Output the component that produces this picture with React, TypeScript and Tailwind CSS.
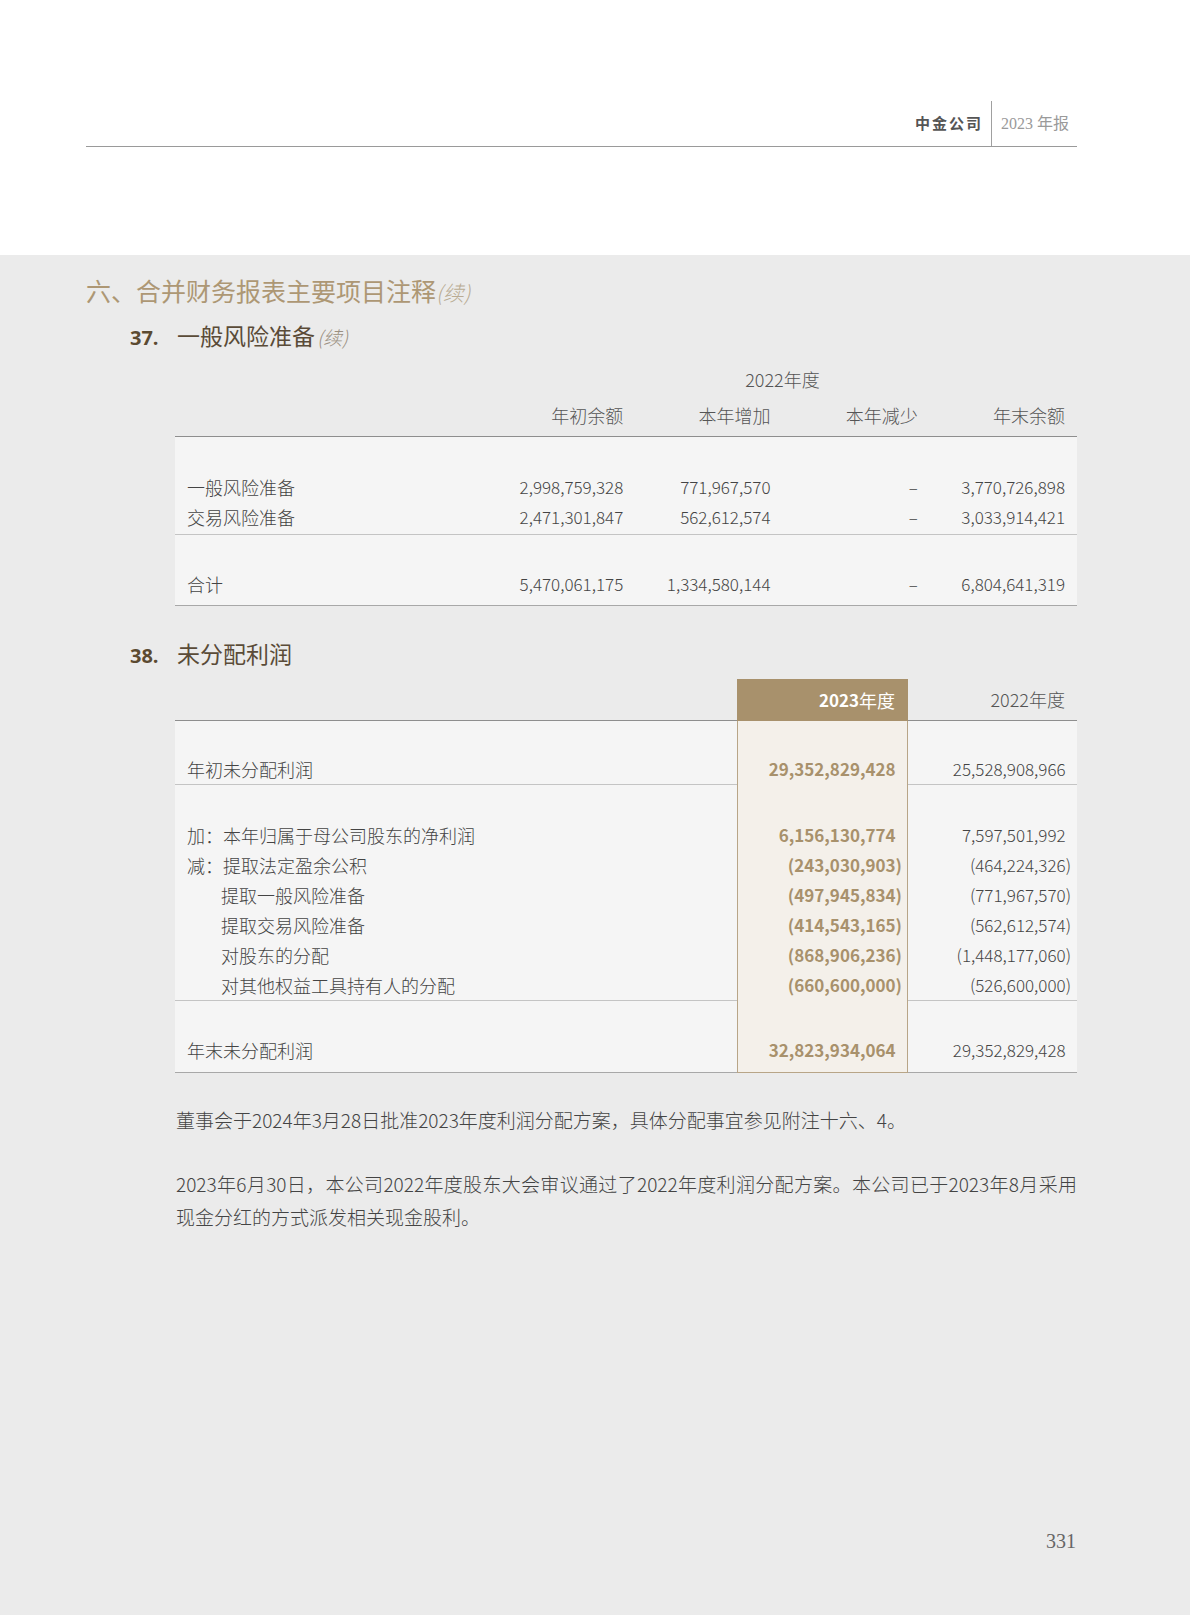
import React from 'react';

const cjk = "font-['Noto_Sans_CJK_SC',sans-serif]";

const reserveRows = [
  { label: '一般风险准备', v: ['2,998,759,328', '771,967,570', '–', '3,770,726,898'] },
  { label: '交易风险准备', v: ['2,471,301,847', '562,612,574', '–', '3,033,914,421'] },
];
const reserveTotal = { label: '合计', v: ['5,470,061,175', '1,334,580,144', '–', '6,804,641,319'] };

type ProfitRow = { label: string; indent?: boolean; a: string; b: string };

const profitGroups: ProfitRow[][] = [
  [{ label: '年初未分配利润', a: '29,352,829,428', b: '25,528,908,966' }],
  [
    { label: '加：本年归属于母公司股东的净利润', a: '6,156,130,774', b: '7,597,501,992' },
    { label: '减：提取法定盈余公积', a: '(243,030,903)', b: '(464,224,326)' },
    { label: '提取一般风险准备', indent: true, a: '(497,945,834)', b: '(771,967,570)' },
    { label: '提取交易风险准备', indent: true, a: '(414,543,165)', b: '(562,612,574)' },
    { label: '对股东的分配', indent: true, a: '(868,906,236)', b: '(1,448,177,060)' },
    { label: '对其他权益工具持有人的分配', indent: true, a: '(660,600,000)', b: '(526,600,000)' },
  ],
  [{ label: '年末未分配利润', a: '32,823,934,064', b: '29,352,829,428' }],
];

// positive numbers keep the width of a closing bracket so digits line up
function Num({ value }: { value: string }) {
  const neg = value.startsWith('(');
  return (
    <span>
      {value}
      {!neg && <span className="invisible">)</span>}
    </span>
  );
}

function ReserveTable() {
  const cols = 'grid grid-cols-[313px_repeat(4,minmax(0,1fr))]';
  return (
    <div className="ml-[175px] w-[902px] mt-[12px]">
      {/* header */}
      <div className="border-b border-[#8e8e8e] pb-[7px]">
        <div className={cols}>
          <div />
          <div className="col-span-4 text-center text-[18px] leading-[28px] text-[#555] font-light">2022年度</div>
        </div>
        <div className={`${cols} mt-2`}>
          <div />
          {['年初余额', '本年增加', '本年减少', '年末余额'].map((h) => (
            <div key={h} className="pr-3 text-right text-[18px] leading-[28px] text-[#555] font-light">
              {h}
            </div>
          ))}
        </div>
      </div>
      {/* body */}
      <div className="bg-[#f5f5f5]">
        <div className="pt-[35px] pb-[2px] border-b border-[#c4c4c4]">
          {reserveRows.map((r) => (
            <div key={r.label} className={`${cols} h-[30px] items-center`}>
              <div className="pl-3 text-[18px] text-[#444] font-light">{r.label}</div>
              {r.v.map((v, i) => (
                <div key={i} className="pr-3 text-right text-[17px] text-[#444] font-light">{v}</div>
              ))}
            </div>
          ))}
        </div>
        <div className="pt-[34px] pb-[6px] border-b border-[#a8a8a8]">
          <div className={`${cols} h-[30px] items-center`}>
            <div className="pl-3 text-[18px] text-[#444] font-light">{reserveTotal.label}</div>
            {reserveTotal.v.map((v, i) => (
              <div key={i} className="pr-3 text-right text-[17px] text-[#444] font-light">{v}</div>
            ))}
          </div>
        </div>
      </div>
    </div>
  );
}

function ProfitTable() {
  const cols = 'grid grid-cols-[562px_171px_1fr]';
  const paddings = ['pt-[33px] pb-0', 'pt-[35px] pb-0', 'pt-[34px] pb-[7px]'];
  return (
    <div className="ml-[175px] w-[902px] mt-[8px]">
      <div className={`${cols} h-[42px]`}>
        <div className="border-b border-[#8e8e8e]" />
        <div className="bg-[#a8916c] flex items-center justify-end pr-[13px] text-[18px] text-white">
          <span className="font-bold text-[17px]">2023</span>
          <span>年度</span>
        </div>
        <div className="border-b border-[#8e8e8e] flex items-center justify-end pr-3 text-[18px] text-[#555] font-light">
          2022年度
        </div>
      </div>
      {profitGroups.map((g, gi) => {
        const last = gi === profitGroups.length - 1;
        const line = last ? 'border-[#a8a8a8]' : 'border-[#c4c4c4]';
        return (
          <div key={gi} className={cols}>
            <div className={`bg-[#f5f5f5] border-b ${line} ${paddings[gi]}`}>
              {g.map((r) => (
                <div
                  key={r.label}
                  className={`h-[30px] flex items-center text-[18px] text-[#444] font-light ${r.indent ? 'pl-[46px]' : 'pl-3'}`}
                >
                  {r.label}
                </div>
              ))}
            </div>
            <div className={`bg-[#f4f0ea] border-x border-[#b8a587] ${last ? 'border-b border-b-[#b8a587]' : 'pb-[1px]'} ${paddings[gi]}`}>
              {g.map((r) => (
                <div key={r.label} className="h-[30px] flex items-center justify-end pr-[5px] text-[17px] font-bold text-[#a8916c]">
                  <Num value={r.a} />
                </div>
              ))}
            </div>
            <div className={`bg-[#f5f5f5] border-b ${line} ${paddings[gi]}`}>
              {g.map((r) => (
                <div key={r.label} className="h-[30px] flex items-center justify-end pr-[6px] text-[17px] text-[#444] font-light">
                  <Num value={r.b} />
                </div>
              ))}
            </div>
          </div>
        );
      })}
    </div>
  );
}

export default function App() {
  return (
    <div className={`w-[1190px] ${cjk}`}>
      {/* page header */}
      <div className="h-[255px] bg-white pt-[101px]">
        <div className="ml-[86px] w-[991px] h-[46px] border-b border-[#9a9a9a] flex justify-end items-stretch">
          <div className="flex items-center pr-[8px] text-[15px] font-bold tracking-[2px] text-[#555]">中金公司</div>
          <div className="w-px bg-[#a0a0a0]" />
          <div className="flex items-center pl-[9px] pr-[8px] text-[16px] text-[#9a9a9a] font-['Liberation_Serif','Noto_Sans_CJK_SC',serif]">
            2023 年报
          </div>
        </div>
      </div>

      {/* page body */}
      <div className="bg-[#ebebeb] pt-[19px] pb-[60px]">
        <h1 className="ml-[86px] text-[25px] leading-[32px] text-[#ad9774] font-normal">
          六、合并财务报表主要项目注释
          <span className="italic text-[21px] pr-[2px] text-[#b9ab93] font-light">(续)</span>
        </h1>
        <h2 className="mt-[12px] flex items-baseline text-[23px] leading-[30px]">
          <span className="ml-[130px] w-[47px] font-bold text-[#5b4a31] font-['Open_Sans',sans-serif] text-[20px]">37.</span>
          <span className="text-[#5a4b38]">一般风险准备</span>
          <span className="italic text-[19px] px-[2px] text-[#9a8f80] font-light">(续)</span>
        </h2>

        <ReserveTable />

        <h2 className="mt-[32px] flex items-baseline text-[23px] leading-[30px]">
          <span className="ml-[130px] w-[47px] font-bold text-[#5b4a31] font-['Open_Sans',sans-serif] text-[20px]">38.</span>
          <span className="text-[#5a4b38]">未分配利润</span>
        </h2>

        <ProfitTable />

        <div className="ml-[176px] w-[901px] text-[19px] leading-[33px] text-[#444] font-light">
          <p className="mt-[30px]">董事会于2024年3月28日批准2023年度利润分配方案，具体分配事宜参见附注十六、4。</p>
          <div className="mt-[31px]">
            <p className="text-justify [text-align-last:justify] whitespace-nowrap">
              2023年6月30日，本公司2022年度股东大会审议通过了2022年度利润分配方案。本公司已于2023年8月采用
            </p>
            <p>现金分红的方式派发相关现金股利。</p>
          </div>
        </div>

        <div className="mt-[294px] ml-[86px] w-[991px] text-right pr-[1px] text-[20px] leading-[28px] text-[#666] font-['Liberation_Serif',serif]">
          331
        </div>
      </div>
    </div>
  );
}
